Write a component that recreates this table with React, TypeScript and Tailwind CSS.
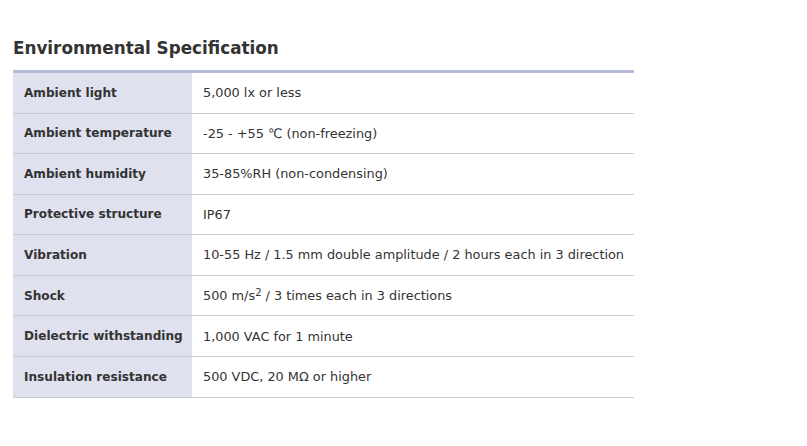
import React from "react";

const rows: [string, React.ReactNode][] = [
  ["Ambient light", "5,000 lx or less"],
  ["Ambient temperature", "-25 - +55 ℃ (non-freezing)"],
  ["Ambient humidity", "35-85%RH (non-condensing)"],
  ["Protective structure", "IP67"],
  ["Vibration", "10-55 Hz / 1.5 mm double amplitude / 2 hours each in 3 direction"],
  [
    "Shock",
    <>
      500 m/s<sup className="text-[10px] relative -top-[3px] mr-[4px]">2</sup>/ 3 times each in 3 directions
    </>,
  ],
  ["Dielectric withstanding", "1,000 VAC for 1 minute"],
  ["Insulation resistance", "500 VDC, 20 MΩ or higher"],
];

export default function App() {
  return (
    <div
      className="w-[807px] h-[446px] bg-white text-[#333]"
      style={{ fontFamily: "'DejaVu Sans', Verdana, sans-serif" }}
    >
      <div className="pl-[13px] pt-[36px]">
        <h2 className="text-[16.8px] font-bold leading-[24px] text-[#333] mb-[10px]">
          Environmental Specification
        </h2>
        <div className="w-[621px] border-t-[3px] border-[#b4bad9]">
          {rows.map(([k, v], i) => (
            <div key={i} className="flex h-[40.57px] border-b border-[#cccccc]">
              <div className="w-[179px] shrink-0 bg-[#dfe1ee] pl-[11px] flex items-center text-[12.1px] font-bold whitespace-nowrap">
                {k}
              </div>
              <div className="flex-1 pl-[11px] flex items-center text-[12.85px] whitespace-nowrap">{v}</div>
            </div>
          ))}
        </div>
      </div>
    </div>
  );
}
